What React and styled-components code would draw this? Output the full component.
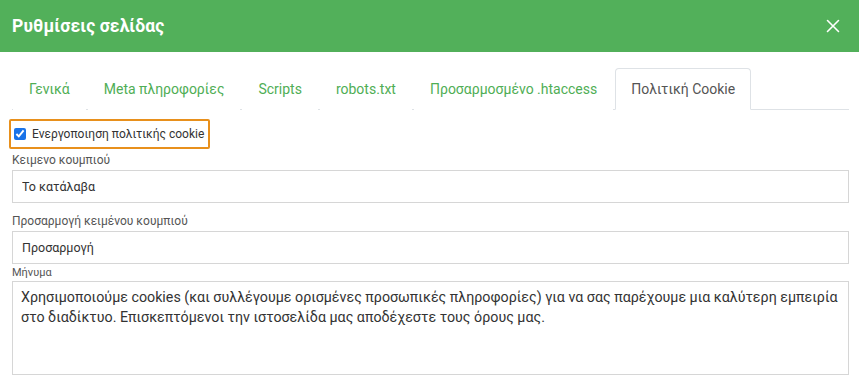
import styled, { createGlobalStyle } from "styled-components";

const GlobalStyle = createGlobalStyle`
  html, body {
    margin: 0;
    padding: 0;
    background: #fff;
    font-family: Roboto, "Liberation Sans", sans-serif;
  }
  * { box-sizing: border-box; }
`;

const Modal = styled.div`
  width: 859px;
  height: 392px;
  background: #fff;
  overflow: hidden;
`;

const Header = styled.div`
  height: 52px;
  background: #52b05a;
  display: flex;
  align-items: center;
  justify-content: space-between;
  padding: 0 19px 0 12px;
  h1 {
    margin: 0;
    color: #fff;
    font-size: 17.5px;
    font-weight: 700;
    letter-spacing: 0.1px;
  }
`;

const Close = styled.button`
  border: 0;
  background: none;
  padding: 0;
  color: #fff;
  display: flex;
  cursor: pointer;
`;

const Body = styled.div`
  padding: 16px 10px 0 12px;
`;

const Tabs = styled.ul`
  list-style: none;
  margin: 0;
  padding: 0 0 0 1px;
  display: flex;
  gap: 2px;
  border-bottom: 1px solid #dee2e6;
`;

const Tab = styled.li`
  height: 42px;
  padding: 0 15px;
  display: flex;
  align-items: center;
  font-size: 14px;
  color: ${({ $active }) => ($active ? "#555" : "#4fae55")};
  border: 1px solid ${({ $active }) => ($active ? "#dee2e6" : "transparent")};
  border-bottom-color: ${({ $active }) => ($active ? "#fff" : "transparent")};
  border-radius: 4px 4px 0 0;
  margin-bottom: -1px;
  background: #fff;
`;

const CheckRow = styled.label`
  display: inline-flex;
  align-items: center;
  gap: 6px;
  margin: 9px 0 0 -3px;
  height: 30px;
  padding: 0 4px 0 3px;
  border: 2px solid #e8901c;
  border-radius: 2px;
  font-size: 12px;
  color: #333;
  input {
    margin: 0;
    width: 12px;
    height: 12px;
    accent-color: #1a73e8;
  }
`;

const Field = styled.div`
  display: flex;
  flex-direction: column;
  margin-top: ${({ $top }) => $top || 0}px;
`;

const Label = styled.span`
  font-size: ${({ $small }) => ($small ? "11px" : "12px")};
  color: #555;
  line-height: ${({ $small }) => ($small ? "14px" : "16px")};
  margin-bottom: ${({ $small }) => ($small ? "1px" : "2px")};
`;

const Input = styled.input`
  height: 33px;
  border: 1px solid #d6d6d6;
  padding: 0 9px;
  font-size: 12.5px;
  font-family: Roboto, "Liberation Sans", sans-serif;
  color: #333;
  width: 837px;
`;

const TextArea = styled.textarea`
  height: 94px;
  width: 837px;
  border: 1px solid #d6d6d6;
  padding: 5px 8px;
  font-size: 14.25px;
  line-height: 20px;
  font-family: Roboto, "Liberation Sans", sans-serif;
  color: #333;
  resize: none;
`;

const tabs = [
  "Γενικά",
  "Meta πληροφορίες",
  "Scripts",
  "robots.txt",
  "Προσαρμοσμένο .htaccess",
  "Πολιτική Cookie",
];

export default function App() {
  return (
    <>
      <GlobalStyle />
      <Modal>
        <Header>
          <h1>Ρυθμίσεις σελίδας</h1>
          <Close aria-label="close">
            <svg width="14" height="14" viewBox="0 0 14 14" stroke="#fff" strokeWidth="1.6" strokeLinecap="round">
              <path d="M1.5 1.5 L12.5 12.5 M12.5 1.5 L1.5 12.5" />
            </svg>
          </Close>
        </Header>
        <Body>
          <Tabs>
            {tabs.map((t, i) => (
              <Tab key={t} $active={i === tabs.length - 1}>
                {t}
              </Tab>
            ))}
          </Tabs>
          <CheckRow>
            <input type="checkbox" defaultChecked />
            Ενεργοποιηση πολιτικής cookie
          </CheckRow>
          <Field $top={3}>
            <Label>Κειμενο κουμπιού</Label>
            <Input defaultValue="Το κατάλαβα" />
          </Field>
          <Field $top={10}>
            <Label>Προσαρμογή κειμένου κουμπιού</Label>
            <Input defaultValue="Προσαρμογή" />
          </Field>
          <Field $top={2}>
            <Label $small>Μήνυμα</Label>
            <TextArea defaultValue="Χρησιμοποιούμε cookies (και συλλέγουμε ορισμένες προσωπικές πληροφορίες) για να σας παρέχουμε μια καλύτερη εμπειρία στο διαδίκτυο. Επισκεπτόμενοι την ιστοσελίδα μας αποδέχεστε τους όρους μας." />
          </Field>
        </Body>
      </Modal>
    </>
  );
}
